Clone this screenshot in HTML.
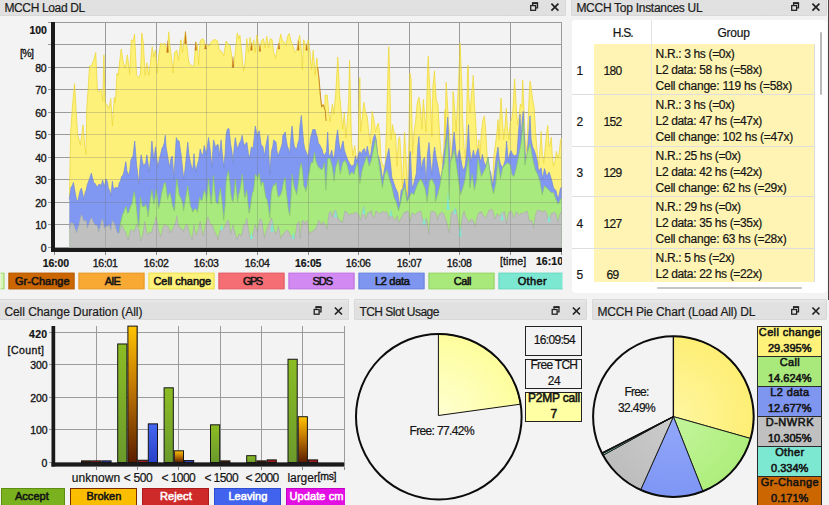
<!DOCTYPE html>
<html lang="en"><head><meta charset="utf-8"><title>MCCH Load</title>
<style>
html,body{margin:0;padding:0;background:#f3f3f3}
body{width:829px;height:505px;overflow:hidden;background:#f3f3f3;position:relative;
 font-family:"Liberation Sans",sans-serif;font-size:12px;color:#141414}
.t{position:absolute;white-space:nowrap;line-height:1;-webkit-text-stroke:.2px currentColor}
.tb{position:absolute;background:linear-gradient(#e9e9e9,#e1e1e1 3px,#e0e0e0);border:1px solid #d8d8d8;box-sizing:border-box;border-radius:1px}
.lg{position:absolute;box-sizing:border-box;border:1px solid #000;height:17px;top:0}
.bx{position:absolute;box-sizing:border-box;border:1px solid #222}
.ab{position:absolute}
svg{position:absolute;left:0;top:0}
</style></head><body>

<div class="tb" style="left:-1px;top:-6px;width:567px;height:22px"></div>
<div class="t" style="left:4.40px;top:2px;letter-spacing:-0.350px;color:#1c1c1c;">MCCH Load DL</div>
<div class="tb" style="left:571px;top:-6px;width:256px;height:22px"></div>
<div class="t" style="left:576.40px;top:2px;letter-spacing:-0.278px;color:#1c1c1c;">MCCH Top Instances UL</div>
<div class="tb" style="left:-1px;top:299px;width:350px;height:21px"></div>
<div class="t" style="left:4.40px;top:306px;letter-spacing:-0.054px;color:#1c1c1c;">Cell Change Duration (All)</div>
<div class="tb" style="left:354px;top:299px;width:233px;height:21px"></div>
<div class="t" style="left:359.40px;top:306px;letter-spacing:-0.514px;color:#1c1c1c;">TCH Slot Usage</div>
<div class="tb" style="left:592px;top:299px;width:235px;height:21px"></div>
<div class="t" style="left:597.40px;top:306px;letter-spacing:-0.145px;color:#1c1c1c;">MCCH Pie Chart (Load All) DL</div>
<div class="ab" style="left:828px;top:0;width:1px;height:300px;background:#4a4744"></div>
<div class="ab" style="left:572px;top:20px;width:254.5px;height:273px;background:#fff;border-radius:4px"></div>
<div class="ab" style="left:594px;top:44px;width:220.5px;height:237.5px;background:#fff4b3"></div>
<div class="ab" style="left:651px;top:20px;width:1px;height:261.5px;background:#e4e4e4"></div>
<div class="ab" style="left:814px;top:44px;width:1px;height:237.5px;background:#dcdcdc"></div>
<div class="ab" style="left:572px;top:94px;width:243px;height:1px;background:#dedede"></div>
<div class="ab" style="left:572px;top:146px;width:243px;height:1px;background:#dedede"></div>
<div class="ab" style="left:572px;top:196px;width:243px;height:1px;background:#dedede"></div>
<div class="ab" style="left:572px;top:248px;width:243px;height:1px;background:#dedede"></div>
<div class="ab" style="left:820px;top:32px;width:2px;height:63px;background:#b9b9b9;border-radius:1px"></div>
<div class="ab" style="left:657px;top:287px;width:145px;height:2px;background:#c4c4c4;border-radius:1px"></div>
<div class="t" style="left:612.80px;top:27px;letter-spacing:-0.835px;">H.S.</div>
<div class="t" style="left:717.40px;top:27px;letter-spacing:-0.191px;">Group</div>
<div class="ab" style="left:572px;top:20px;width:254px;height:261.5px;overflow:hidden">
<div class="t" style="left:4.40px;top:45px;">1</div>
<div class="t" style="left:31.39px;top:45px;letter-spacing:-0.667px;">180</div>
<div class="t" style="left:83.60px;top:28px;letter-spacing:-0.343px;">N.R.: 3 hs (=0x)</div>
<div class="t" style="left:83.60px;top:44px;letter-spacing:-0.352px;">L2 data: 58 hs (=58x)</div>
<div class="t" style="left:83.60px;top:60px;letter-spacing:-0.247px;">Cell change: 119 hs (=58x)</div>
<div class="t" style="left:4.40px;top:96px;">2</div>
<div class="t" style="left:31.39px;top:96px;letter-spacing:-0.667px;">152</div>
<div class="t" style="left:83.60px;top:79px;letter-spacing:-0.343px;">N.R.: 3 hs (=0x)</div>
<div class="t" style="left:83.60px;top:95px;letter-spacing:-0.352px;">L2 data: 47 hs (=47x)</div>
<div class="t" style="left:83.60px;top:111px;letter-spacing:-0.249px;">Cell change: 102 hs (=47x)</div>
<div class="t" style="left:4.40px;top:147px;">3</div>
<div class="t" style="left:31.39px;top:147px;letter-spacing:-0.667px;">129</div>
<div class="t" style="left:83.60px;top:130px;letter-spacing:-0.348px;">N.R.: 25 hs (=0x)</div>
<div class="t" style="left:83.60px;top:146px;letter-spacing:-0.352px;">L2 data: 42 hs (=42x)</div>
<div class="t" style="left:83.60px;top:162px;letter-spacing:-0.247px;">Cell change: 62 hs (=29x)</div>
<div class="t" style="left:4.40px;top:198px;">4</div>
<div class="t" style="left:31.39px;top:198px;letter-spacing:-0.667px;">127</div>
<div class="t" style="left:83.60px;top:181px;letter-spacing:-0.348px;">N.R.: 29 hs (=0x)</div>
<div class="t" style="left:83.60px;top:197px;letter-spacing:-0.352px;">L2 data: 35 hs (=35x)</div>
<div class="t" style="left:83.60px;top:213px;letter-spacing:-0.247px;">Cell change: 63 hs (=28x)</div>
<div class="t" style="left:4.40px;top:249px;">5</div>
<div class="t" style="left:34.39px;top:249px;letter-spacing:-0.667px;">69</div>
<div class="t" style="left:83.60px;top:232px;letter-spacing:-0.343px;">N.R.: 5 hs (=2x)</div>
<div class="t" style="left:83.60px;top:248px;letter-spacing:-0.352px;">L2 data: 22 hs (=22x)</div>
<div class="t" style="left:83.60px;top:264px;letter-spacing:-0.245px;">Cell change: 33 hs (=11x)</div>
</div>
<svg width="829" height="505" viewBox="0 0 829 505">
<path d="M48,247.5H561.5M48,224.5H561.5M48,202.5H561.5M48,179.5H561.5M48,157.5H561.5M48,134.5H561.5M48,112.5H561.5M48,89.5H561.5M48,67.5H561.5M48,44.5H561.5M48,22.5H561.5M105.5,22V247.5M156.5,22V247.5M206.5,22V247.5M257.5,22V247.5M308.5,22V247.5M358.5,22V247.5M409.5,22V247.5M459.5,22V247.5M510.5,22V247.5M561.5,22V247.5" stroke="#9b9b9b" fill="none"/>
<defs><clipPath id="cpA"><path d="M69.3,249L69.3,199.6L69.4,199.6L70.6,134.0L72.2,109.9L74.5,83.5L76.1,109.9L77.5,132.9L79.1,140.0L80.3,145.0L81.4,137.5L83.0,124.8L84.9,146.6L86.0,154.5L86.7,109.9L88.3,86.9L89.5,66.2L91.8,65.1L93.6,60.5L95.7,52.5L97.5,91.5L99.8,91.5L100.9,89.2L102.8,100.7L103.9,54.8L105.1,103.0L106.7,104.1L109.0,108.7L110.8,98.4L112.4,126.0L114.3,97.3L115.4,103.0L117.0,73.1L118.2,75.4L119.3,65.1L121.2,49.0L123.5,63.9L125.1,68.5L127.4,54.8L129.7,74.3L131.3,39.8L133.1,41.0L134.5,34.1L136.6,75.4L138.9,77.7L140.5,73.1L141.8,32.9L143.4,43.3L145.1,75.4L146.9,62.8L148.7,75.4L150.3,63.9L152.2,46.7L153.8,57.1L155.4,50.2L157.2,73.1L158.8,54.8L160.7,43.3L163.0,44.4L164.8,43.3L166.4,47.9L167.6,52.5L168.7,31.8L169.9,45.6L171.7,59.4L173.1,73.1L174.5,52.5L176.8,50.2L178.6,60.5L180.9,39.8L182.5,52.5L183.6,43.3L185.5,31.8L187.1,47.9L188.7,61.6L190.5,65.1L192.8,66.2L194.0,65.1L195.8,42.1L197.4,44.4L198.6,65.1L200.2,41.0L202.0,38.7L203.9,39.8L205.5,47.9L207.1,44.4L208.9,46.7L211.2,42.1L213.5,39.8L215.8,39.8L217.6,41.0L219.3,50.2L221.6,51.3L223.8,55.9L226.1,41.0L228.4,44.4L230.1,45.6L231.9,57.1L233.5,67.4L235.3,52.5L237.2,32.9L238.8,38.7L239.9,35.2L241.5,50.2L243.4,70.8L245.0,63.9L245.0,63.9L246.8,38.7L248.4,52.5L250.1,37.5L251.9,50.2L253.7,39.8L255.3,52.5L256.9,35.2L258.3,43.3L259.9,50.2L261.5,41.0L263.4,38.7L265.2,47.9L266.8,36.4L268.7,47.9L270.3,38.7L272.1,39.8L273.7,52.5L275.6,58.2L277.2,47.9L279.0,43.3L280.8,34.1L282.4,41.0L284.1,42.1L285.9,45.6L287.5,36.4L289.1,33.6L290.9,41.0L293.2,46.7L295.1,52.5L296.7,50.2L298.3,41.0L299.7,35.2L301.3,50.2L302.4,69.7L303.6,39.8L305.2,44.4L306.6,47.9L308.2,39.8L309.8,50.2L311.6,69.7L313.2,50.2L315.1,75.4L316.9,58.2L318.5,75.4L319.9,93.8L321.5,106.4L323.1,104.1L324.9,109.9L325.0,95.0L327.2,95.0L328.7,111.3L330.2,121.7L331.7,108.4L332.4,103.9L333.9,114.3L335.7,93.8L336.1,86.7L337.8,57.1L339.1,83.1L339.6,93.8L341.0,109.9L342.8,129.2L344.3,112.8L345.8,138.1L347.3,121.7L348.8,98.0L349.5,60.5L350.2,84.8L351.4,139.6L352.9,155.9L354.7,145.5L356.2,157.4L358.0,156.4L359.5,79.4L359.9,77.7L360.6,132.1L362.1,118.8L363.9,102.4L365.4,111.3L367.3,117.3L368.8,133.6L370.3,144.0L372.2,111.3L374.0,120.2L375.5,132.1L377.0,126.2L378.2,123.2L379.7,133.6L381.1,160.3L382.9,166.3L385.2,164.8L386.6,124.7L388.1,66.0L388.8,46.7L389.6,72.4L391.1,139.6L392.6,124.7L394.1,133.6L395.5,133.6L397.0,166.3L398.5,139.6L399.7,136.6L401.0,157.4L402.5,188.6L404.5,132.1L405.9,154.4L407.4,198.3L408.9,139.6L409.9,73.1L410.1,74.0L411.1,79.5L412.6,154.4L414.1,132.1L415.6,121.7L417.1,103.9L418.9,97.2L420.4,106.9L421.8,129.2L423.3,99.5L424.8,117.3L426.0,132.1L427.5,72.4L428.3,55.9L429.0,72.9L430.5,100.9L431.9,136.6L432.9,86.9L433.4,81.9L434.5,70.8L434.9,80.8L436.4,100.9L437.9,103.9L439.4,132.1L440.8,151.4L442.3,163.3L443.8,147.0L445.0,109.9L445.0,144.0L446.1,82.3L446.2,83.4L447.2,99.5L448.7,124.7L450.2,139.6L451.7,157.8L452.7,124.7L453.0,91.5L453.6,95.0L454.7,109.9L456.1,132.1L457.2,109.9L458.4,86.0L459.9,50.4L460.1,43.3L461.3,72.3L462.2,93.8L462.5,117.3L464.0,147.0L465.5,158.9L466.5,124.7L467.6,68.0L468.2,65.1L468.8,98.0L470.2,112.8L471.4,95.0L472.9,81.4L473.2,75.4L474.4,103.9L475.9,124.7L476.9,147.0L478.0,148.3L478.9,139.6L479.9,158.5L481.4,132.1L482.9,120.2L484.4,115.8L485.8,132.1L487.3,158.9L489.6,169.8L492.5,184.2L494.0,154.4L495.5,144.0L497.0,132.1L498.0,119.5L499.2,139.6L500.3,109.9L501.1,98.0L502.2,117.3L503.7,139.6L505.2,124.7L506.3,108.4L507.4,127.7L508.9,139.6L510.3,121.7L511.5,120.2L513.0,109.9L514.5,80.3L514.6,78.9L516.0,102.4L517.5,124.7L519.0,117.3L520.4,103.9L521.9,106.9L522.6,80.0L523.0,86.8L524.0,109.9L525.2,139.6L526.7,151.4L528.2,117.3L529.7,85.4L530.2,81.2L531.1,87.2L532.6,99.5L534.1,106.9L535.6,132.1L537.1,151.4L538.6,166.3L540.1,147.0L541.2,131.4L542.3,154.4L543.8,163.3L545.3,147.0L546.7,132.1L547.8,125.4L549.0,147.0L550.2,144.0L551.2,137.3L552.2,154.4L553.4,166.3L554.9,161.8L556.4,151.4L557.6,157.4L559.1,154.4L560.1,144.0L561.3,138.1L561.6,138.1L561.6,249Z"/></clipPath></defs>
<path d="M69.3,249L69.3,199.6L69.4,199.6L70.6,134.0L72.2,109.9L74.5,83.5L76.1,109.9L77.5,132.9L79.1,140.0L80.3,145.0L81.4,137.5L83.0,124.8L84.9,146.6L86.0,154.5L86.7,109.9L88.3,86.9L89.5,66.2L91.8,65.1L93.6,60.5L95.7,52.5L97.5,91.5L99.8,91.5L100.9,89.2L102.8,100.7L103.9,54.8L105.1,103.0L106.7,104.1L109.0,108.7L110.8,98.4L112.4,126.0L114.3,97.3L115.4,103.0L117.0,73.1L118.2,75.4L119.3,65.1L121.2,49.0L123.5,63.9L125.1,68.5L127.4,54.8L129.7,74.3L131.3,39.8L133.1,41.0L134.5,34.1L136.6,75.4L138.9,77.7L140.5,73.1L141.8,32.9L143.4,43.3L145.1,75.4L146.9,62.8L148.7,75.4L150.3,63.9L152.2,46.7L153.8,57.1L155.4,50.2L157.2,73.1L158.8,54.8L160.7,43.3L163.0,44.4L164.8,43.3L166.4,47.9L167.6,52.5L168.7,31.8L169.9,45.6L171.7,59.4L173.1,73.1L174.5,52.5L176.8,50.2L178.6,60.5L180.9,39.8L182.5,52.5L183.6,43.3L185.5,31.8L187.1,47.9L188.7,61.6L190.5,65.1L192.8,66.2L194.0,65.1L195.8,42.1L197.4,44.4L198.6,65.1L200.2,41.0L202.0,38.7L203.9,39.8L205.5,47.9L207.1,44.4L208.9,46.7L211.2,42.1L213.5,39.8L215.8,39.8L217.6,41.0L219.3,50.2L221.6,51.3L223.8,55.9L226.1,41.0L228.4,44.4L230.1,45.6L231.9,57.1L233.5,67.4L235.3,52.5L237.2,32.9L238.8,38.7L239.9,35.2L241.5,50.2L243.4,70.8L245.0,63.9L245.0,63.9L246.8,38.7L248.4,52.5L250.1,37.5L251.9,50.2L253.7,39.8L255.3,52.5L256.9,35.2L258.3,43.3L259.9,50.2L261.5,41.0L263.4,38.7L265.2,47.9L266.8,36.4L268.7,47.9L270.3,38.7L272.1,39.8L273.7,52.5L275.6,58.2L277.2,47.9L279.0,43.3L280.8,34.1L282.4,41.0L284.1,42.1L285.9,45.6L287.5,36.4L289.1,33.6L290.9,41.0L293.2,46.7L295.1,52.5L296.7,50.2L298.3,41.0L299.7,35.2L301.3,50.2L302.4,69.7L303.6,39.8L305.2,44.4L306.6,47.9L308.2,39.8L309.8,50.2L311.6,69.7L313.2,50.2L315.1,75.4L316.9,58.2L318.5,75.4L319.9,93.8L321.5,106.4L323.1,104.1L324.9,109.9L325.0,95.0L327.2,95.0L328.7,111.3L330.2,121.7L331.7,108.4L332.4,103.9L333.9,114.3L335.7,93.8L336.1,86.7L337.8,57.1L339.1,83.1L339.6,93.8L341.0,109.9L342.8,129.2L344.3,112.8L345.8,138.1L347.3,121.7L348.8,98.0L349.5,60.5L350.2,84.8L351.4,139.6L352.9,155.9L354.7,145.5L356.2,157.4L358.0,156.4L359.5,79.4L359.9,77.7L360.6,132.1L362.1,118.8L363.9,102.4L365.4,111.3L367.3,117.3L368.8,133.6L370.3,144.0L372.2,111.3L374.0,120.2L375.5,132.1L377.0,126.2L378.2,123.2L379.7,133.6L381.1,160.3L382.9,166.3L385.2,164.8L386.6,124.7L388.1,66.0L388.8,46.7L389.6,72.4L391.1,139.6L392.6,124.7L394.1,133.6L395.5,133.6L397.0,166.3L398.5,139.6L399.7,136.6L401.0,157.4L402.5,188.6L404.5,132.1L405.9,154.4L407.4,198.3L408.9,139.6L409.9,73.1L410.1,74.0L411.1,79.5L412.6,154.4L414.1,132.1L415.6,121.7L417.1,103.9L418.9,97.2L420.4,106.9L421.8,129.2L423.3,99.5L424.8,117.3L426.0,132.1L427.5,72.4L428.3,55.9L429.0,72.9L430.5,100.9L431.9,136.6L432.9,86.9L433.4,81.9L434.5,70.8L434.9,80.8L436.4,100.9L437.9,103.9L439.4,132.1L440.8,151.4L442.3,163.3L443.8,147.0L445.0,109.9L445.0,144.0L446.1,82.3L446.2,83.4L447.2,99.5L448.7,124.7L450.2,139.6L451.7,157.8L452.7,124.7L453.0,91.5L453.6,95.0L454.7,109.9L456.1,132.1L457.2,109.9L458.4,86.0L459.9,50.4L460.1,43.3L461.3,72.3L462.2,93.8L462.5,117.3L464.0,147.0L465.5,158.9L466.5,124.7L467.6,68.0L468.2,65.1L468.8,98.0L470.2,112.8L471.4,95.0L472.9,81.4L473.2,75.4L474.4,103.9L475.9,124.7L476.9,147.0L478.0,148.3L478.9,139.6L479.9,158.5L481.4,132.1L482.9,120.2L484.4,115.8L485.8,132.1L487.3,158.9L489.6,169.8L492.5,184.2L494.0,154.4L495.5,144.0L497.0,132.1L498.0,119.5L499.2,139.6L500.3,109.9L501.1,98.0L502.2,117.3L503.7,139.6L505.2,124.7L506.3,108.4L507.4,127.7L508.9,139.6L510.3,121.7L511.5,120.2L513.0,109.9L514.5,80.3L514.6,78.9L516.0,102.4L517.5,124.7L519.0,117.3L520.4,103.9L521.9,106.9L522.6,80.0L523.0,86.8L524.0,109.9L525.2,139.6L526.7,151.4L528.2,117.3L529.7,85.4L530.2,81.2L531.1,87.2L532.6,99.5L534.1,106.9L535.6,132.1L537.1,151.4L538.6,166.3L540.1,147.0L541.2,131.4L542.3,154.4L543.8,163.3L545.3,147.0L546.7,132.1L547.8,125.4L549.0,147.0L550.2,144.0L551.2,137.3L552.2,154.4L553.4,166.3L554.9,161.8L556.4,151.4L557.6,157.4L559.1,154.4L560.1,144.0L561.3,138.1L561.6,138.1L561.6,249Z" fill="#fdf17a"/><path d="M69.3,199.6L69.4,199.6L70.6,134.0L72.2,109.9L74.5,83.5L76.1,109.9L77.5,132.9L79.1,140.0L80.3,145.0L81.4,137.5L83.0,124.8L84.9,146.6L86.0,154.5L86.7,109.9L88.3,86.9L89.5,66.2L91.8,65.1L93.6,60.5L95.7,52.5L97.5,91.5L99.8,91.5L100.9,89.2L102.8,100.7L103.9,54.8L105.1,103.0L106.7,104.1L109.0,108.7L110.8,98.4L112.4,126.0L114.3,97.3L115.4,103.0L117.0,73.1L118.2,75.4L119.3,65.1L121.2,49.0L123.5,63.9L125.1,68.5L127.4,54.8L129.7,74.3L131.3,39.8L133.1,41.0L134.5,34.1L136.6,75.4L138.9,77.7L140.5,73.1L141.8,32.9L143.4,43.3L145.1,75.4L146.9,62.8L148.7,75.4L150.3,63.9L152.2,46.7L153.8,57.1L155.4,50.2L157.2,73.1L158.8,54.8L160.7,43.3L163.0,44.4L164.8,43.3L166.4,47.9L167.6,52.5L168.7,31.8L169.9,45.6L171.7,59.4L173.1,73.1L174.5,52.5L176.8,50.2L178.6,60.5L180.9,39.8L182.5,52.5L183.6,43.3L185.5,31.8L187.1,47.9L188.7,61.6L190.5,65.1L192.8,66.2L194.0,65.1L195.8,42.1L197.4,44.4L198.6,65.1L200.2,41.0L202.0,38.7L203.9,39.8L205.5,47.9L207.1,44.4L208.9,46.7L211.2,42.1L213.5,39.8L215.8,39.8L217.6,41.0L219.3,50.2L221.6,51.3L223.8,55.9L226.1,41.0L228.4,44.4L230.1,45.6L231.9,57.1L233.5,67.4L235.3,52.5L237.2,32.9L238.8,38.7L239.9,35.2L241.5,50.2L243.4,70.8L245.0,63.9L245.0,63.9L246.8,38.7L248.4,52.5L250.1,37.5L251.9,50.2L253.7,39.8L255.3,52.5L256.9,35.2L258.3,43.3L259.9,50.2L261.5,41.0L263.4,38.7L265.2,47.9L266.8,36.4L268.7,47.9L270.3,38.7L272.1,39.8L273.7,52.5L275.6,58.2L277.2,47.9L279.0,43.3L280.8,34.1L282.4,41.0L284.1,42.1L285.9,45.6L287.5,36.4L289.1,33.6L290.9,41.0L293.2,46.7L295.1,52.5L296.7,50.2L298.3,41.0L299.7,35.2L301.3,50.2L302.4,69.7L303.6,39.8L305.2,44.4L306.6,47.9L308.2,39.8L309.8,50.2L311.6,69.7L313.2,50.2L315.1,75.4L316.9,58.2L318.5,75.4L319.9,93.8L321.5,106.4L323.1,104.1L324.9,109.9L325.0,95.0L327.2,95.0L328.7,111.3L330.2,121.7L331.7,108.4L332.4,103.9L333.9,114.3L335.7,93.8L336.1,86.7L337.8,57.1L339.1,83.1L339.6,93.8L341.0,109.9L342.8,129.2L344.3,112.8L345.8,138.1L347.3,121.7L348.8,98.0L349.5,60.5L350.2,84.8L351.4,139.6L352.9,155.9L354.7,145.5L356.2,157.4L358.0,156.4L359.5,79.4L359.9,77.7L360.6,132.1L362.1,118.8L363.9,102.4L365.4,111.3L367.3,117.3L368.8,133.6L370.3,144.0L372.2,111.3L374.0,120.2L375.5,132.1L377.0,126.2L378.2,123.2L379.7,133.6L381.1,160.3L382.9,166.3L385.2,164.8L386.6,124.7L388.1,66.0L388.8,46.7L389.6,72.4L391.1,139.6L392.6,124.7L394.1,133.6L395.5,133.6L397.0,166.3L398.5,139.6L399.7,136.6L401.0,157.4L402.5,188.6L404.5,132.1L405.9,154.4L407.4,198.3L408.9,139.6L409.9,73.1L410.1,74.0L411.1,79.5L412.6,154.4L414.1,132.1L415.6,121.7L417.1,103.9L418.9,97.2L420.4,106.9L421.8,129.2L423.3,99.5L424.8,117.3L426.0,132.1L427.5,72.4L428.3,55.9L429.0,72.9L430.5,100.9L431.9,136.6L432.9,86.9L433.4,81.9L434.5,70.8L434.9,80.8L436.4,100.9L437.9,103.9L439.4,132.1L440.8,151.4L442.3,163.3L443.8,147.0L445.0,109.9L445.0,144.0L446.1,82.3L446.2,83.4L447.2,99.5L448.7,124.7L450.2,139.6L451.7,157.8L452.7,124.7L453.0,91.5L453.6,95.0L454.7,109.9L456.1,132.1L457.2,109.9L458.4,86.0L459.9,50.4L460.1,43.3L461.3,72.3L462.2,93.8L462.5,117.3L464.0,147.0L465.5,158.9L466.5,124.7L467.6,68.0L468.2,65.1L468.8,98.0L470.2,112.8L471.4,95.0L472.9,81.4L473.2,75.4L474.4,103.9L475.9,124.7L476.9,147.0L478.0,148.3L478.9,139.6L479.9,158.5L481.4,132.1L482.9,120.2L484.4,115.8L485.8,132.1L487.3,158.9L489.6,169.8L492.5,184.2L494.0,154.4L495.5,144.0L497.0,132.1L498.0,119.5L499.2,139.6L500.3,109.9L501.1,98.0L502.2,117.3L503.7,139.6L505.2,124.7L506.3,108.4L507.4,127.7L508.9,139.6L510.3,121.7L511.5,120.2L513.0,109.9L514.5,80.3L514.6,78.9L516.0,102.4L517.5,124.7L519.0,117.3L520.4,103.9L521.9,106.9L522.6,80.0L523.0,86.8L524.0,109.9L525.2,139.6L526.7,151.4L528.2,117.3L529.7,85.4L530.2,81.2L531.1,87.2L532.6,99.5L534.1,106.9L535.6,132.1L537.1,151.4L538.6,166.3L540.1,147.0L541.2,131.4L542.3,154.4L543.8,163.3L545.3,147.0L546.7,132.1L547.8,125.4L549.0,147.0L550.2,144.0L551.2,137.3L552.2,154.4L553.4,166.3L554.9,161.8L556.4,151.4L557.6,157.4L559.1,154.4L560.1,144.0L561.3,138.1L561.6,138.1" fill="none" stroke="#efd93a" stroke-width=".8" stroke-linejoin="round"/>
<path d="M166.7,52.5L167.6,40.5L168.5,52.5Z" fill="#c8741a" stroke="#c07020" stroke-width=".3"/>
<path d="M184.6,43.7L185.5,31.3L186.4,43.7Z" fill="#c8741a" stroke="#c07020" stroke-width=".3"/>
<path d="M194.9,50.2L195.8,41.6L196.7,50.2Z" fill="#c8741a" stroke="#c07020" stroke-width=".3"/>
<path d="M204.6,49.0L205.5,43.9L206.4,49.0Z" fill="#c8741a" stroke="#c07020" stroke-width=".3"/>
<path d="M232.1,67.4L233.0,56.6L233.9,67.4Z" fill="#c8741a" stroke="#c07020" stroke-width=".3"/>
<path d="M250.5,50.2L251.4,42.8L252.3,50.2Z" fill="#c8741a" stroke="#c07020" stroke-width=".3"/>
<path d="M259.0,51.3L259.9,45.1L260.8,51.3Z" fill="#c8741a" stroke="#c07020" stroke-width=".3"/>
<path d="M278.1,49.0L279.0,42.8L279.9,49.0Z" fill="#c8741a" stroke="#c07020" stroke-width=".3"/>
<path d="M297.4,50.2L298.3,40.5L299.2,50.2Z" fill="#c8741a" stroke="#c07020" stroke-width=".3"/>
<path d="M305.7,50.2L306.6,43.9L307.5,50.2Z" fill="#c8741a" stroke="#c07020" stroke-width=".3"/>
<path d="M317.6,67.4L319.0,78.2L320.4,95.0L321.7,107.1L323.3,104.8L325.2,110.4L326.1,120.9" fill="none" stroke="#c98a2a"/>
<path d="M69.3,249L69.3,199.2L71.1,187.0L72.3,185.9L73.4,182.4L75.4,193.9L76.8,200.8L78.1,200.1L79.1,195.0L79.9,191.4L81.4,188.1L82.9,194.7L83.7,199.6L85.1,193.0L86.0,190.4L87.7,183.4L89.5,178.9L91.3,173.2L92.7,178.8L94.1,183.5L94.9,183.2L96.4,185.8L97.3,187.4L98.6,184.7L100.0,184.1L100.9,187.0L102.6,180.1L104.4,187.0L106.0,178.9L107.4,181.7L108.3,188.1L109.6,190.2L110.8,196.2L112.4,181.2L113.2,187.2L114.7,189.3L115.7,187.2L117.0,188.1L118.5,187.2L119.3,182.4L120.3,181.9L121.6,176.6L122.8,175.3L123.9,172.1L125.8,161.7L126.9,170.9L128.5,175.5L129.8,170.5L130.8,160.6L132.2,157.2L133.1,156.0L134.7,141.0L136.6,165.2L137.6,173.2L138.9,184.7L139.8,167.5L141.1,154.8L142.2,160.5L143.4,165.2L144.3,164.9L145.7,162.9L146.9,154.8L147.9,162.5L149.2,172.1L150.8,156.4L151.9,141.0L153.8,160.6L155.6,146.8L156.6,157.0L157.9,167.5L159.5,158.3L160.7,153.7L162.2,147.7L163.0,146.8L164.3,142.8L165.3,135.3L166.1,147.1L167.6,156.0L168.6,162.1L169.9,167.5L170.7,159.4L172.2,156.0L174.0,178.9L174.9,160.6L176.3,137.6L177.4,140.6L179.1,141.0L180.5,150.8L181.3,156.0L182.4,166.7L183.6,178.9L184.8,171.2L185.9,160.6L187.8,142.2L188.8,153.8L190.5,162.9L191.9,168.2L192.8,169.8L194.0,153.7L194.8,165.2L196.3,172.1L197.1,165.5L198.6,160.6L200.2,149.1L202.0,156.0L203.3,153.0L204.3,145.6L206.2,154.8L207.2,148.4L208.5,137.6L210.1,149.1L211.9,167.5L213.5,139.9L214.7,143.5L215.8,149.1L216.8,145.1L218.1,144.5L219.3,156.0L221.1,139.9L222.1,151.8L223.8,167.5L225.1,154.0L226.1,135.3L227.2,129.5L228.9,128.4L230.7,144.5L232.2,153.8L233.0,162.9L234.1,148.9L235.3,137.6L236.5,145.0L237.6,149.1L238.8,145.2L239.9,142.2L240.8,140.9L242.2,135.3L243.1,141.0L244.5,146.8L245.0,144.5L246.8,142.2L248.4,153.7L249.6,158.3L251.4,146.8L253.0,149.1L254.4,135.7L255.3,126.1L256.6,133.0L257.6,135.3L259.2,130.7L261.1,144.5L262.9,146.8L264.5,156.0L266.1,144.5L268.0,135.3L269.8,174.4L271.4,151.4L272.7,147.1L273.7,139.9L274.6,140.7L276.0,142.2L276.9,150.9L278.3,156.0L279.3,152.3L280.6,149.1L282.1,144.0L282.9,135.3L284.4,133.3L285.2,131.9L286.3,140.5L287.5,146.8L288.6,149.1L289.8,153.7L290.9,138.1L292.1,126.1L293.2,139.0L294.4,146.8L295.9,148.6L296.7,149.1L297.8,143.6L299.0,139.9L299.9,126.5L301.3,115.5L302.6,130.8L303.6,142.2L304.6,148.3L305.9,151.4L307.2,154.7L308.2,156.0L309.4,148.1L310.5,137.6L311.5,134.6L312.8,129.6L313.8,129.5L315.1,129.6L316.4,134.6L317.4,137.6L318.4,143.4L319.7,144.5L320.9,147.2L322.0,149.1L322.8,152.8L324.3,156.0L325.0,154.4L326.5,151.4L327.7,132.1L328.7,154.4L330.2,155.9L331.7,150.0L333.2,158.9L334.7,154.4L336.1,139.6L337.6,129.9L339.1,144.0L340.6,151.4L342.1,144.0L343.1,141.0L344.3,150.0L345.8,154.4L347.3,158.9L349.5,163.3L351.7,166.3L354.0,164.8L355.4,155.9L356.9,161.8L358.4,154.4L359.9,151.4L361.4,154.4L362.9,150.0L364.4,148.5L365.8,154.4L367.3,146.2L368.8,154.4L370.3,157.4L371.8,147.0L373.3,138.1L374.8,134.4L376.2,139.6L377.7,154.4L379.2,158.9L380.7,166.3L382.2,177.0L382.8,178.9L384.4,170.0L385.9,161.8L387.4,154.4L388.9,148.5L390.3,161.8L391.8,177.2L393.2,181.2L395.5,188.1L397.8,192.7L399.4,206.5L401.2,190.4L403.1,188.1L404.7,178.9L405.8,190.4L407.6,199.6L408.2,195.9L409.7,154.4L410.4,151.4L411.9,185.1L412.7,188.1L414.1,182.5L415.0,178.9L416.3,173.6L417.8,147.0L418.9,136.6L420.1,154.4L421.5,170.0L423.0,160.3L424.5,157.4L426.0,184.1L427.5,154.4L429.0,142.5L430.5,161.8L431.9,175.2L433.4,154.4L434.6,147.0L436.1,157.4L437.9,166.3L439.4,174.2L440.6,178.9L442.3,170.0L443.8,154.4L445.0,147.0L445.0,145.5L446.2,136.6L447.7,117.3L449.2,147.0L450.6,166.3L452.1,154.4L453.2,139.6L454.2,132.1L455.4,147.0L456.9,161.8L458.1,154.4L459.4,150.0L460.6,157.4L462.1,166.3L463.6,170.4L465.1,166.3L466.5,154.4L467.6,139.6L468.5,124.7L469.5,147.0L471.0,161.8L472.5,154.4L473.5,150.0L474.7,157.4L476.2,154.4L478.0,148.5L479.5,157.4L480.9,161.8L482.4,154.4L483.9,161.8L485.8,166.3L488.1,157.4L489.6,170.0L490.5,172.1L492.8,185.8L494.0,177.1L496.2,157.4L498.0,147.0L499.2,158.9L500.7,164.8L502.9,167.8L505.2,160.3L506.6,141.0L508.1,160.3L509.6,154.4L511.1,150.7L512.6,154.4L514.8,155.9L517.0,154.4L518.5,132.1L520.0,114.3L521.0,139.6L522.2,120.2L523.3,111.3L524.5,139.6L525.9,164.1L527.4,151.4L528.9,132.1L530.0,115.8L531.1,139.6L532.6,147.0L534.1,150.0L535.6,154.4L537.1,160.3L538.6,171.2L541.0,167.8L542.6,178.9L544.5,168.6L546.8,176.6L549.1,172.1L551.3,178.9L553.6,188.1L555.9,190.4L558.2,199.6L560.5,188.1L561.3,187.5L561.6,187.5L561.6,249Z" fill="#8098f2"/><path d="M69.3,199.2L71.1,187.0L72.3,185.9L73.4,182.4L75.4,193.9L76.8,200.8L78.1,200.1L79.1,195.0L79.9,191.4L81.4,188.1L82.9,194.7L83.7,199.6L85.1,193.0L86.0,190.4L87.7,183.4L89.5,178.9L91.3,173.2L92.7,178.8L94.1,183.5L94.9,183.2L96.4,185.8L97.3,187.4L98.6,184.7L100.0,184.1L100.9,187.0L102.6,180.1L104.4,187.0L106.0,178.9L107.4,181.7L108.3,188.1L109.6,190.2L110.8,196.2L112.4,181.2L113.2,187.2L114.7,189.3L115.7,187.2L117.0,188.1L118.5,187.2L119.3,182.4L120.3,181.9L121.6,176.6L122.8,175.3L123.9,172.1L125.8,161.7L126.9,170.9L128.5,175.5L129.8,170.5L130.8,160.6L132.2,157.2L133.1,156.0L134.7,141.0L136.6,165.2L137.6,173.2L138.9,184.7L139.8,167.5L141.1,154.8L142.2,160.5L143.4,165.2L144.3,164.9L145.7,162.9L146.9,154.8L147.9,162.5L149.2,172.1L150.8,156.4L151.9,141.0L153.8,160.6L155.6,146.8L156.6,157.0L157.9,167.5L159.5,158.3L160.7,153.7L162.2,147.7L163.0,146.8L164.3,142.8L165.3,135.3L166.1,147.1L167.6,156.0L168.6,162.1L169.9,167.5L170.7,159.4L172.2,156.0L174.0,178.9L174.9,160.6L176.3,137.6L177.4,140.6L179.1,141.0L180.5,150.8L181.3,156.0L182.4,166.7L183.6,178.9L184.8,171.2L185.9,160.6L187.8,142.2L188.8,153.8L190.5,162.9L191.9,168.2L192.8,169.8L194.0,153.7L194.8,165.2L196.3,172.1L197.1,165.5L198.6,160.6L200.2,149.1L202.0,156.0L203.3,153.0L204.3,145.6L206.2,154.8L207.2,148.4L208.5,137.6L210.1,149.1L211.9,167.5L213.5,139.9L214.7,143.5L215.8,149.1L216.8,145.1L218.1,144.5L219.3,156.0L221.1,139.9L222.1,151.8L223.8,167.5L225.1,154.0L226.1,135.3L227.2,129.5L228.9,128.4L230.7,144.5L232.2,153.8L233.0,162.9L234.1,148.9L235.3,137.6L236.5,145.0L237.6,149.1L238.8,145.2L239.9,142.2L240.8,140.9L242.2,135.3L243.1,141.0L244.5,146.8L245.0,144.5L246.8,142.2L248.4,153.7L249.6,158.3L251.4,146.8L253.0,149.1L254.4,135.7L255.3,126.1L256.6,133.0L257.6,135.3L259.2,130.7L261.1,144.5L262.9,146.8L264.5,156.0L266.1,144.5L268.0,135.3L269.8,174.4L271.4,151.4L272.7,147.1L273.7,139.9L274.6,140.7L276.0,142.2L276.9,150.9L278.3,156.0L279.3,152.3L280.6,149.1L282.1,144.0L282.9,135.3L284.4,133.3L285.2,131.9L286.3,140.5L287.5,146.8L288.6,149.1L289.8,153.7L290.9,138.1L292.1,126.1L293.2,139.0L294.4,146.8L295.9,148.6L296.7,149.1L297.8,143.6L299.0,139.9L299.9,126.5L301.3,115.5L302.6,130.8L303.6,142.2L304.6,148.3L305.9,151.4L307.2,154.7L308.2,156.0L309.4,148.1L310.5,137.6L311.5,134.6L312.8,129.6L313.8,129.5L315.1,129.6L316.4,134.6L317.4,137.6L318.4,143.4L319.7,144.5L320.9,147.2L322.0,149.1L322.8,152.8L324.3,156.0L325.0,154.4L326.5,151.4L327.7,132.1L328.7,154.4L330.2,155.9L331.7,150.0L333.2,158.9L334.7,154.4L336.1,139.6L337.6,129.9L339.1,144.0L340.6,151.4L342.1,144.0L343.1,141.0L344.3,150.0L345.8,154.4L347.3,158.9L349.5,163.3L351.7,166.3L354.0,164.8L355.4,155.9L356.9,161.8L358.4,154.4L359.9,151.4L361.4,154.4L362.9,150.0L364.4,148.5L365.8,154.4L367.3,146.2L368.8,154.4L370.3,157.4L371.8,147.0L373.3,138.1L374.8,134.4L376.2,139.6L377.7,154.4L379.2,158.9L380.7,166.3L382.2,177.0L382.8,178.9L384.4,170.0L385.9,161.8L387.4,154.4L388.9,148.5L390.3,161.8L391.8,177.2L393.2,181.2L395.5,188.1L397.8,192.7L399.4,206.5L401.2,190.4L403.1,188.1L404.7,178.9L405.8,190.4L407.6,199.6L408.2,195.9L409.7,154.4L410.4,151.4L411.9,185.1L412.7,188.1L414.1,182.5L415.0,178.9L416.3,173.6L417.8,147.0L418.9,136.6L420.1,154.4L421.5,170.0L423.0,160.3L424.5,157.4L426.0,184.1L427.5,154.4L429.0,142.5L430.5,161.8L431.9,175.2L433.4,154.4L434.6,147.0L436.1,157.4L437.9,166.3L439.4,174.2L440.6,178.9L442.3,170.0L443.8,154.4L445.0,147.0L445.0,145.5L446.2,136.6L447.7,117.3L449.2,147.0L450.6,166.3L452.1,154.4L453.2,139.6L454.2,132.1L455.4,147.0L456.9,161.8L458.1,154.4L459.4,150.0L460.6,157.4L462.1,166.3L463.6,170.4L465.1,166.3L466.5,154.4L467.6,139.6L468.5,124.7L469.5,147.0L471.0,161.8L472.5,154.4L473.5,150.0L474.7,157.4L476.2,154.4L478.0,148.5L479.5,157.4L480.9,161.8L482.4,154.4L483.9,161.8L485.8,166.3L488.1,157.4L489.6,170.0L490.5,172.1L492.8,185.8L494.0,177.1L496.2,157.4L498.0,147.0L499.2,158.9L500.7,164.8L502.9,167.8L505.2,160.3L506.6,141.0L508.1,160.3L509.6,154.4L511.1,150.7L512.6,154.4L514.8,155.9L517.0,154.4L518.5,132.1L520.0,114.3L521.0,139.6L522.2,120.2L523.3,111.3L524.5,139.6L525.9,164.1L527.4,151.4L528.9,132.1L530.0,115.8L531.1,139.6L532.6,147.0L534.1,150.0L535.6,154.4L537.1,160.3L538.6,171.2L541.0,167.8L542.6,178.9L544.5,168.6L546.8,176.6L549.1,172.1L551.3,178.9L553.6,188.1L555.9,190.4L558.2,199.6L560.5,188.1L561.3,187.5L561.6,187.5" fill="none" stroke="#6f86dc" stroke-width=".7" stroke-linejoin="round"/>
<path d="M69.3,249L69.3,229.3L71.1,222.6L72.0,223.3L73.4,223.7L75.0,228.7L76.8,232.9L78.1,227.5L79.1,224.9L79.9,220.8L81.4,214.6L82.4,217.1L83.7,221.4L85.2,220.8L86.0,220.3L87.2,228.3L88.5,225.4L89.5,222.6L90.7,219.2L91.8,218.0L93.0,222.0L94.1,223.7L95.2,225.1L96.4,224.9L97.6,226.9L98.6,231.8L100.6,225.8L102.1,219.1L103.1,222.2L104.4,228.3L105.8,227.1L106.7,226.0L108.0,226.7L109.0,224.9L110.8,230.6L112.4,220.3L113.7,223.4L114.7,223.7L115.8,228.7L117.0,231.8L118.1,233.8L119.2,233.0L119.3,232.9L120.3,224.3L121.6,219.1L122.7,214.2L123.9,212.3L124.8,209.0L126.2,206.5L127.4,213.4L128.8,212.4L129.7,208.8L131.0,205.3L132.0,204.2L133.1,196.9L134.3,191.6L135.2,198.5L136.6,208.8L137.5,219.9L138.9,227.2L140.5,197.3L142.3,206.5L144.4,206.7L145.7,204.2L147.1,209.2L148.0,216.9L149.1,208.8L150.3,199.6L151.9,190.4L153.8,204.2L155.1,198.3L156.1,189.3L157.5,197.2L158.4,208.8L159.6,205.0L160.7,199.6L161.8,192.5L163.0,188.1L164.1,183.5L165.3,182.4L166.7,192.6L167.6,199.6L168.7,195.3L169.9,192.7L171.3,198.8L172.2,204.2L173.6,209.2L174.5,211.1L175.6,194.6L176.8,178.9L178.0,186.7L179.1,195.0L180.0,196.5L181.3,199.6L182.7,203.4L183.6,211.1L184.5,204.8L185.9,197.3L187.8,185.8L189.0,196.3L190.5,206.5L191.7,208.7L192.8,212.3L194.3,209.2L195.1,208.8L196.2,209.2L197.4,212.3L198.7,203.8L199.7,197.3L200.8,200.1L202.0,200.8L203.1,195.9L204.3,190.4L205.7,194.4L206.6,201.9L208.5,178.9L209.5,190.4L211.2,204.2L212.5,190.4L213.5,175.5L214.5,188.0L215.8,201.9L216.7,202.9L218.1,204.2L218.9,197.0L220.4,188.1L222.5,206.2L223.8,220.3L225.2,203.9L226.1,183.5L227.0,176.3L228.4,170.9L229.9,183.0L230.7,192.7L231.8,199.3L233.0,201.9L234.3,191.8L235.3,178.9L236.3,189.1L237.6,201.9L238.7,194.6L239.9,190.4L241.0,184.4L242.2,174.4L243.3,183.7L244.5,197.3L245.0,197.3L246.8,190.4L247.7,200.5L249.1,213.4L250.5,205.9L251.4,199.6L252.4,193.3L253.7,190.4L255.3,174.4L256.8,176.3L257.6,178.9L259.2,173.2L261.1,185.8L262.0,182.2L263.4,182.4L264.2,188.4L265.7,197.3L266.9,199.2L268.0,204.2L269.8,218.0L271.4,192.7L272.3,188.7L273.7,184.7L274.7,185.7L276.0,182.4L276.9,190.0L278.3,197.3L279.6,195.8L280.6,195.0L282.1,190.3L282.9,185.8L283.9,181.4L285.2,177.8L286.0,189.5L287.5,201.9L288.5,210.5L289.8,215.7L291.2,195.0L292.1,174.4L292.9,180.2L294.4,188.1L295.4,190.3L296.7,195.0L297.7,188.0L299.0,177.8L299.9,168.4L301.3,162.9L302.7,174.6L303.6,185.8L305.1,188.3L305.9,191.6L307.3,184.8L308.2,176.6L309.5,172.0L310.5,165.2L311.6,162.2L312.8,162.9L314.6,152.5L315.7,160.5L317.4,165.2L318.8,168.2L319.7,167.5L320.7,169.3L322.0,169.8L323.3,166.9L324.3,162.9L325.9,190.4L327.7,158.9L330.0,158.3L332.3,167.5L334.1,181.2L335.7,167.5L338.4,158.9L340.3,174.4L342.6,162.9L345.1,160.3L347.2,165.2L349.5,175.5L351.8,172.1L354.1,174.4L355.7,167.5L357.6,162.9L359.9,183.5L362.2,169.8L364.5,162.9L366.8,156.0L369.1,166.3L371.3,160.6L373.6,149.1L375.5,139.6L377.8,156.0L380.1,172.1L382.4,188.1L384.7,174.4L387.0,169.8L389.3,178.9L391.6,185.8L393.9,197.3L396.2,201.9L398.5,211.1L400.8,201.9L403.1,190.4L404.7,187.0L407.0,201.9L409.3,197.3L411.6,192.7L413.8,195.0L416.1,188.1L418.4,182.4L420.7,178.9L423.0,183.5L424.9,188.1L427.2,201.9L429.5,181.2L431.8,178.9L435.0,185.8L435.3,201.9L437.6,195.0L439.9,185.8L442.2,172.1L444.5,162.9L446.1,146.8L447.7,135.1L449.1,199.6L450.3,162.9L452.6,156.0L454.2,150.0L456.0,162.9L458.3,178.9L460.6,195.0L462.9,188.1L465.2,178.9L468.5,157.4L469.8,188.1L472.1,174.4L474.4,190.4L476.7,178.9L478.0,158.9L481.3,176.6L483.6,172.1L485.9,167.5L488.1,158.0L489.3,168.6L491.6,185.8L493.5,193.9L495.8,183.5L498.0,160.3L500.4,178.9L502.6,168.0L504.9,165.2L507.2,162.9L510.3,164.8L511.8,174.4L514.1,176.6L516.4,167.5L518.7,156.0L521.0,144.0L523.3,121.7L524.9,165.2L527.2,153.8L530.0,144.0L533.0,160.6L535.3,169.8L537.6,174.4L539.9,181.2L542.2,195.0L544.5,185.8L546.8,188.1L549.1,190.4L551.3,192.7L553.6,192.7L555.9,199.6L558.2,204.2L560.5,199.6L561.6,197.9L561.6,249Z" fill="#a9ea7e"/><path d="M119.2,233.0L119.3,232.9L120.3,224.3L121.6,219.1L122.7,214.2L123.9,212.3L124.8,209.0L126.2,206.5L127.4,213.4L128.8,212.4L129.7,208.8L131.0,205.3L132.0,204.2L133.1,196.9L134.3,191.6L135.2,198.5L136.6,208.8L137.5,219.9L138.9,227.2L140.5,197.3L142.3,206.5L144.4,206.7L145.7,204.2L147.1,209.2L148.0,216.9L149.1,208.8L150.3,199.6L151.9,190.4L153.8,204.2L155.1,198.3L156.1,189.3L157.5,197.2L158.4,208.8L159.6,205.0L160.7,199.6L161.8,192.5L163.0,188.1L164.1,183.5L165.3,182.4L166.7,192.6L167.6,199.6L168.7,195.3L169.9,192.7L171.3,198.8L172.2,204.2L173.6,209.2L174.5,211.1L175.6,194.6L176.8,178.9L178.0,186.7L179.1,195.0L180.0,196.5L181.3,199.6L182.7,203.4L183.6,211.1L184.5,204.8L185.9,197.3L187.8,185.8L189.0,196.3L190.5,206.5L191.7,208.7L192.8,212.3L194.3,209.2L195.1,208.8L196.2,209.2L197.4,212.3L198.7,203.8L199.7,197.3L200.8,200.1L202.0,200.8L203.1,195.9L204.3,190.4L205.7,194.4L206.6,201.9L208.5,178.9L209.5,190.4L211.2,204.2L212.5,190.4L213.5,175.5L214.5,188.0L215.8,201.9L216.7,202.9L218.1,204.2L218.9,197.0L220.4,188.1L222.5,206.2L223.8,220.3L225.2,203.9L226.1,183.5L227.0,176.3L228.4,170.9L229.9,183.0L230.7,192.7L231.8,199.3L233.0,201.9L234.3,191.8L235.3,178.9L236.3,189.1L237.6,201.9L238.7,194.6L239.9,190.4L241.0,184.4L242.2,174.4L243.3,183.7L244.5,197.3L245.0,197.3L246.8,190.4L247.7,200.5L249.1,213.4L250.5,205.9L251.4,199.6L252.4,193.3L253.7,190.4L255.3,174.4L256.8,176.3L257.6,178.9L259.2,173.2L261.1,185.8L262.0,182.2L263.4,182.4L264.2,188.4L265.7,197.3L266.9,199.2L268.0,204.2L269.8,218.0L271.4,192.7L272.3,188.7L273.7,184.7L274.7,185.7L276.0,182.4L276.9,190.0L278.3,197.3L279.6,195.8L280.6,195.0L282.1,190.3L282.9,185.8L283.9,181.4L285.2,177.8L286.0,189.5L287.5,201.9L288.5,210.5L289.8,215.7L291.2,195.0L292.1,174.4L292.9,180.2L294.4,188.1L295.4,190.3L296.7,195.0L297.7,188.0L299.0,177.8L299.9,168.4L301.3,162.9L302.7,174.6L303.6,185.8L305.1,188.3L305.9,191.6L307.3,184.8L308.2,176.6L309.5,172.0L310.5,165.2L311.6,162.2L312.8,162.9L314.6,152.5L315.7,160.5L317.4,165.2L318.8,168.2L319.7,167.5L320.7,169.3L322.0,169.8L323.3,166.9L324.3,162.9L325.9,190.4L327.7,158.9L330.0,158.3L332.3,167.5L334.1,181.2L335.7,167.5L338.4,158.9L340.3,174.4L342.6,162.9L345.1,160.3L347.2,165.2L349.5,175.5L351.8,172.1L354.1,174.4L355.7,167.5L357.6,162.9L359.9,183.5L362.2,169.8L364.5,162.9L366.8,156.0L369.1,166.3L371.3,160.6L373.6,149.1L375.5,139.6L377.8,156.0L380.1,172.1L382.4,188.1L384.7,174.4L387.0,169.8L389.3,178.9L391.6,185.8L393.9,197.3L396.2,201.9L398.5,211.1L400.8,201.9L403.1,190.4L404.7,187.0L407.0,201.9L409.3,197.3L411.6,192.7L413.8,195.0L416.1,188.1L418.4,182.4L420.7,178.9L423.0,183.5L424.9,188.1L427.2,201.9L429.5,181.2L431.8,178.9L435.0,185.8L435.3,201.9L437.6,195.0L439.9,185.8L442.2,172.1L444.5,162.9L446.1,146.8L447.7,135.1L449.1,199.6L450.3,162.9L452.6,156.0L454.2,150.0L456.0,162.9L458.3,178.9L460.6,195.0L462.9,188.1L465.2,178.9L468.5,157.4L469.8,188.1L472.1,174.4L474.4,190.4L476.7,178.9L478.0,158.9L481.3,176.6L483.6,172.1L485.9,167.5L488.1,158.0L489.3,168.6L491.6,185.8L493.5,193.9L495.8,183.5L498.0,160.3L500.4,178.9L502.6,168.0L504.9,165.2L507.2,162.9L510.3,164.8L511.8,174.4L514.1,176.6L516.4,167.5L518.7,156.0L521.0,144.0L523.3,121.7L524.9,165.2L527.2,153.8L530.0,144.0L533.0,160.6L535.3,169.8L537.6,174.4L539.9,181.2L542.2,195.0L544.5,185.8L546.8,188.1L549.1,190.4L551.3,192.7L553.6,192.7L555.9,199.6L558.2,204.2L560.5,199.6L561.6,197.9" fill="none" stroke="#8dc866" stroke-width=".7" stroke-linejoin="round"/>
<path d="M69.3,249L69.3,229.3L71.1,222.6L72.0,223.3L73.4,223.7L75.0,228.7L76.8,232.9L78.1,227.5L79.1,224.9L79.9,220.8L81.4,214.6L82.4,217.1L83.7,221.4L85.2,220.8L86.0,220.3L87.2,228.3L88.5,225.4L89.5,222.6L90.7,219.2L91.8,218.0L93.0,222.0L94.1,223.7L95.2,225.1L96.4,224.9L97.6,226.9L98.6,231.8L100.6,225.8L102.1,219.1L103.1,222.2L104.4,228.3L105.8,227.1L106.7,226.0L108.0,226.7L109.0,224.9L110.8,230.6L112.4,220.3L113.7,223.4L114.7,223.7L115.8,228.7L117.0,231.8L118.1,233.8L119.3,232.9L120.7,227.6L121.6,224.9L122.5,226.3L123.9,229.5L125.4,231.6L126.2,234.1L128.1,239.8L129.5,234.0L130.8,229.5L132.5,230.3L134.3,231.8L135.3,228.0L136.6,223.7L137.8,227.9L138.9,229.5L140.1,236.6L141.1,241.0L143.2,232.8L144.6,221.4L145.9,226.7L146.9,234.1L148.3,234.4L149.2,231.8L150.6,232.6L151.5,232.9L152.8,228.0L153.8,224.9L155.2,221.1L156.1,216.9L157.1,221.8L158.4,229.5L159.8,234.5L160.7,236.4L161.5,232.7L163.0,227.2L164.1,224.9L165.3,224.9L166.3,226.3L167.6,226.0L169.0,228.0L169.9,232.9L171.1,230.3L172.2,230.6L173.5,227.2L174.5,224.9L175.9,221.8L176.8,215.7L177.9,223.0L179.1,227.2L180.1,227.0L181.3,229.5L182.6,229.1L183.6,231.8L184.6,228.0L185.9,224.9L187.2,224.9L188.2,227.2L189.1,232.4L190.5,235.2L192.1,239.8L194.0,224.9L195.0,231.5L196.3,235.2L197.7,231.4L198.6,228.3L200.2,221.4L201.6,229.0L203.2,236.4L204.4,230.9L205.5,224.9L206.7,221.3L207.8,216.9L209.2,220.3L210.1,223.7L211.2,225.0L212.4,224.9L213.3,227.7L214.7,231.8L216.9,235.9L218.1,239.8L219.3,233.1L220.4,229.5L222.0,229.2L223.8,228.3L224.7,226.4L226.1,223.7L227.4,220.6L228.4,220.3L229.7,227.1L230.7,234.1L232.0,229.0L233.0,224.9L234.3,230.2L235.3,234.1L237.2,239.8L238.8,234.1L239.6,233.8L241.1,236.4L242.3,232.1L243.4,224.9L245.0,224.9L246.8,218.0L248.4,229.5L249.4,234.5L250.7,239.8L252.0,236.4L253.0,234.1L254.1,228.9L255.3,224.9L256.4,228.6L257.6,231.8L258.6,225.1L259.9,219.1L261.3,219.4L262.2,222.6L263.4,231.4L264.5,238.7L265.5,233.2L266.8,229.5L268.2,225.8L269.1,223.7L270.1,220.7L271.4,218.0L272.7,222.5L273.7,229.5L274.7,231.3L276.0,234.1L277.4,229.9L278.3,226.0L279.7,231.3L280.6,238.7L281.6,236.9L282.9,234.1L284.3,232.8L285.2,231.8L286.2,230.0L287.5,230.6L288.7,231.4L289.8,234.1L291.2,236.3L292.1,236.4L293.0,236.8L294.4,238.7L295.8,232.2L296.7,224.9L298.0,222.7L299.0,221.4L300.1,238.7L301.0,228.8L302.4,220.3L303.8,221.3L304.7,223.7L305.8,221.8L307.0,220.3L308.1,226.9L309.3,234.1L310.8,231.8L311.6,231.8L312.4,232.1L313.9,229.5L315.3,229.9L316.2,227.2L317.3,225.2L318.5,220.3L320.0,221.7L320.8,224.9L322.1,224.2L323.1,221.4L324.4,223.2L325.4,224.9L327.2,229.5L328.9,213.4L330.5,211.1L332.3,216.9L334.1,211.1L335.7,210.0L336.7,214.0L338.0,219.1L339.0,218.9L340.3,221.4L341.5,221.3L342.6,222.6L344.0,215.4L344.9,211.1L346.4,212.3L347.2,212.3L348.7,214.7L349.5,214.6L350.9,214.2L351.8,213.4L352.6,214.2L354.1,213.4L355.0,212.2L356.4,212.3L357.7,213.5L358.7,214.6L360.6,220.3L362.2,212.3L363.8,206.5L365.6,219.1L366.7,217.1L367.9,212.3L369.1,212.3L370.2,213.4L371.3,210.0L372.3,215.1L373.6,218.0L374.8,215.5L375.9,211.1L377.0,211.3L378.2,213.4L379.4,213.8L380.5,212.3L381.5,212.6L382.8,211.1L384.3,212.7L385.1,212.3L386.5,211.3L387.4,213.4L389.3,219.1L390.9,211.1L392.1,215.7L393.2,218.0L394.0,218.4L395.5,220.3L397.1,215.7L398.9,222.6L399.9,220.4L401.2,218.0L402.3,215.6L403.5,213.4L404.9,211.8L405.8,213.4L406.7,211.1L408.1,211.1L409.9,222.6L411.6,213.4L412.4,212.6L413.8,214.6L415.3,215.1L416.1,213.4L417.0,212.8L418.4,212.3L419.5,211.1L420.7,211.1L421.8,216.2L423.0,220.3L424.9,224.9L426.5,218.0L427.7,225.6L428.8,234.1L430.6,212.3L431.6,211.1L432.9,211.1L433.7,211.9L435.0,212.3L435.3,212.3L436.6,215.9L437.6,220.3L438.5,215.8L439.9,213.4L441.0,213.2L442.2,212.3L443.6,213.6L444.5,215.7L445.9,219.5L446.8,222.6L447.9,227.4L449.1,232.9L450.3,223.2L451.4,212.3L452.5,212.3L453.7,211.1L454.8,209.1L456.0,208.8L457.2,216.3L458.3,222.6L460.1,236.4L461.8,220.3L462.6,215.5L464.1,211.1L465.2,215.8L466.4,218.0L467.8,219.9L468.6,222.6L470.1,221.8L470.9,219.1L471.9,219.6L473.2,220.3L475.1,227.2L476.7,218.0L477.6,216.1L479.0,212.3L480.2,212.9L481.3,211.1L482.6,213.9L483.6,215.7L484.9,217.1L485.9,218.0L486.8,215.4L488.2,212.3L489.0,210.0L490.5,210.0L491.8,209.1L492.8,211.1L493.6,213.8L495.1,219.1L496.5,215.2L497.4,213.4L498.2,215.6L499.7,215.7L500.5,215.1L502.0,212.3L503.2,212.8L504.3,211.1L505.7,217.7L506.6,223.7L507.9,216.5L508.9,212.3L510.2,211.7L511.1,211.1L512.4,213.3L513.4,218.0L514.8,216.5L515.7,212.3L516.6,212.3L518.0,213.4L519.2,215.0L520.3,214.6L521.3,213.0L522.6,213.4L523.6,213.2L524.9,212.3L526.3,211.3L527.2,211.1L528.3,215.9L529.5,221.4L530.6,220.6L531.8,220.3L533.7,228.3L535.3,215.7L536.1,212.8L537.6,210.0L539.0,210.3L539.9,211.1L541.2,210.6L542.2,212.3L543.4,211.9L544.5,210.0L545.7,211.7L546.8,213.4L547.9,217.9L549.1,221.4L550.5,216.3L551.3,213.4L552.2,213.6L553.6,212.3L555.1,212.9L555.9,213.4L557.1,218.7L558.2,222.6L559.2,216.7L560.5,212.3L561.6,213.1L561.6,249Z" fill="#c0c0c0"/><path d="M69.3,229.3L71.1,222.6L72.0,223.3L73.4,223.7L75.0,228.7L76.8,232.9L78.1,227.5L79.1,224.9L79.9,220.8L81.4,214.6L82.4,217.1L83.7,221.4L85.2,220.8L86.0,220.3L87.2,228.3L88.5,225.4L89.5,222.6L90.7,219.2L91.8,218.0L93.0,222.0L94.1,223.7L95.2,225.1L96.4,224.9L97.6,226.9L98.6,231.8L100.6,225.8L102.1,219.1L103.1,222.2L104.4,228.3L105.8,227.1L106.7,226.0L108.0,226.7L109.0,224.9L110.8,230.6L112.4,220.3L113.7,223.4L114.7,223.7L115.8,228.7L117.0,231.8L118.1,233.8L119.3,232.9L120.7,227.6L121.6,224.9L122.5,226.3L123.9,229.5L125.4,231.6L126.2,234.1L128.1,239.8L129.5,234.0L130.8,229.5L132.5,230.3L134.3,231.8L135.3,228.0L136.6,223.7L137.8,227.9L138.9,229.5L140.1,236.6L141.1,241.0L143.2,232.8L144.6,221.4L145.9,226.7L146.9,234.1L148.3,234.4L149.2,231.8L150.6,232.6L151.5,232.9L152.8,228.0L153.8,224.9L155.2,221.1L156.1,216.9L157.1,221.8L158.4,229.5L159.8,234.5L160.7,236.4L161.5,232.7L163.0,227.2L164.1,224.9L165.3,224.9L166.3,226.3L167.6,226.0L169.0,228.0L169.9,232.9L171.1,230.3L172.2,230.6L173.5,227.2L174.5,224.9L175.9,221.8L176.8,215.7L177.9,223.0L179.1,227.2L180.1,227.0L181.3,229.5L182.6,229.1L183.6,231.8L184.6,228.0L185.9,224.9L187.2,224.9L188.2,227.2L189.1,232.4L190.5,235.2L192.1,239.8L194.0,224.9L195.0,231.5L196.3,235.2L197.7,231.4L198.6,228.3L200.2,221.4L201.6,229.0L203.2,236.4L204.4,230.9L205.5,224.9L206.7,221.3L207.8,216.9L209.2,220.3L210.1,223.7L211.2,225.0L212.4,224.9L213.3,227.7L214.7,231.8L216.9,235.9L218.1,239.8L219.3,233.1L220.4,229.5L222.0,229.2L223.8,228.3L224.7,226.4L226.1,223.7L227.4,220.6L228.4,220.3L229.7,227.1L230.7,234.1L232.0,229.0L233.0,224.9L234.3,230.2L235.3,234.1L237.2,239.8L238.8,234.1L239.6,233.8L241.1,236.4L242.3,232.1L243.4,224.9L245.0,224.9L246.8,218.0L248.4,229.5L249.4,234.5L250.7,239.8L252.0,236.4L253.0,234.1L254.1,228.9L255.3,224.9L256.4,228.6L257.6,231.8L258.6,225.1L259.9,219.1L261.3,219.4L262.2,222.6L263.4,231.4L264.5,238.7L265.5,233.2L266.8,229.5L268.2,225.8L269.1,223.7L270.1,220.7L271.4,218.0L272.7,222.5L273.7,229.5L274.7,231.3L276.0,234.1L277.4,229.9L278.3,226.0L279.7,231.3L280.6,238.7L281.6,236.9L282.9,234.1L284.3,232.8L285.2,231.8L286.2,230.0L287.5,230.6L288.7,231.4L289.8,234.1L291.2,236.3L292.1,236.4L293.0,236.8L294.4,238.7L295.8,232.2L296.7,224.9L298.0,222.7L299.0,221.4L300.1,238.7L301.0,228.8L302.4,220.3L303.8,221.3L304.7,223.7L305.8,221.8L307.0,220.3L308.1,226.9L309.3,234.1L310.8,231.8L311.6,231.8L312.4,232.1L313.9,229.5L315.3,229.9L316.2,227.2L317.3,225.2L318.5,220.3L320.0,221.7L320.8,224.9L322.1,224.2L323.1,221.4L324.4,223.2L325.4,224.9L327.2,229.5L328.9,213.4L330.5,211.1L332.3,216.9L334.1,211.1L335.7,210.0L336.7,214.0L338.0,219.1L339.0,218.9L340.3,221.4L341.5,221.3L342.6,222.6L344.0,215.4L344.9,211.1L346.4,212.3L347.2,212.3L348.7,214.7L349.5,214.6L350.9,214.2L351.8,213.4L352.6,214.2L354.1,213.4L355.0,212.2L356.4,212.3L357.7,213.5L358.7,214.6L360.6,220.3L362.2,212.3L363.8,206.5L365.6,219.1L366.7,217.1L367.9,212.3L369.1,212.3L370.2,213.4L371.3,210.0L372.3,215.1L373.6,218.0L374.8,215.5L375.9,211.1L377.0,211.3L378.2,213.4L379.4,213.8L380.5,212.3L381.5,212.6L382.8,211.1L384.3,212.7L385.1,212.3L386.5,211.3L387.4,213.4L389.3,219.1L390.9,211.1L392.1,215.7L393.2,218.0L394.0,218.4L395.5,220.3L397.1,215.7L398.9,222.6L399.9,220.4L401.2,218.0L402.3,215.6L403.5,213.4L404.9,211.8L405.8,213.4L406.7,211.1L408.1,211.1L409.9,222.6L411.6,213.4L412.4,212.6L413.8,214.6L415.3,215.1L416.1,213.4L417.0,212.8L418.4,212.3L419.5,211.1L420.7,211.1L421.8,216.2L423.0,220.3L424.9,224.9L426.5,218.0L427.7,225.6L428.8,234.1L430.6,212.3L431.6,211.1L432.9,211.1L433.7,211.9L435.0,212.3L435.3,212.3L436.6,215.9L437.6,220.3L438.5,215.8L439.9,213.4L441.0,213.2L442.2,212.3L443.6,213.6L444.5,215.7L445.9,219.5L446.8,222.6L447.9,227.4L449.1,232.9L450.3,223.2L451.4,212.3L452.5,212.3L453.7,211.1L454.8,209.1L456.0,208.8L457.2,216.3L458.3,222.6L460.1,236.4L461.8,220.3L462.6,215.5L464.1,211.1L465.2,215.8L466.4,218.0L467.8,219.9L468.6,222.6L470.1,221.8L470.9,219.1L471.9,219.6L473.2,220.3L475.1,227.2L476.7,218.0L477.6,216.1L479.0,212.3L480.2,212.9L481.3,211.1L482.6,213.9L483.6,215.7L484.9,217.1L485.9,218.0L486.8,215.4L488.2,212.3L489.0,210.0L490.5,210.0L491.8,209.1L492.8,211.1L493.6,213.8L495.1,219.1L496.5,215.2L497.4,213.4L498.2,215.6L499.7,215.7L500.5,215.1L502.0,212.3L503.2,212.8L504.3,211.1L505.7,217.7L506.6,223.7L507.9,216.5L508.9,212.3L510.2,211.7L511.1,211.1L512.4,213.3L513.4,218.0L514.8,216.5L515.7,212.3L516.6,212.3L518.0,213.4L519.2,215.0L520.3,214.6L521.3,213.0L522.6,213.4L523.6,213.2L524.9,212.3L526.3,211.3L527.2,211.1L528.3,215.9L529.5,221.4L530.6,220.6L531.8,220.3L533.7,228.3L535.3,215.7L536.1,212.8L537.6,210.0L539.0,210.3L539.9,211.1L541.2,210.6L542.2,212.3L543.4,211.9L544.5,210.0L545.7,211.7L546.8,213.4L547.9,217.9L549.1,221.4L550.5,216.3L551.3,213.4L552.2,213.6L553.6,212.3L555.1,212.9L555.9,213.4L557.1,218.7L558.2,222.6L559.2,216.7L560.5,212.3L561.6,213.1" fill="none" stroke="#a9a9a9" stroke-width=".6" stroke-linejoin="round"/>
<path d="M249.9,239.1L251.4,231.8L252.9,239.1Z" fill="#7fe9d3"/>
<path d="M270.6,231.8L272.1,220.3L273.6,231.8Z" fill="#7fe9d3"/>
<path d="M291.7,239.1L293.2,231.8L294.7,239.1Z" fill="#7fe9d3"/>
<path d="M334.2,217.5L335.7,210.0L337.2,217.5Z" fill="#7fe9d3"/>
<path d="M362.3,213.9L363.8,205.4L365.3,213.9Z" fill="#7fe9d3"/>
<path d="M389.4,216.2L390.9,208.8L392.4,216.2Z" fill="#7fe9d3"/>
<path d="M422.7,224.4L424.2,216.9L425.7,224.4Z" fill="#7fe9d3"/>
<path d="M446.5,210.0L448.0,190.4L449.5,210.0Z" fill="#7fe9d3"/>
<path d="M453.4,213.9L454.9,206.5L456.4,213.9Z" fill="#7fe9d3"/>
<path d="M458.6,236.8L460.1,224.9L461.6,236.8Z" fill="#7fe9d3"/>
<path d="M500.5,220.8L502.0,211.1L503.5,220.8Z" fill="#7fe9d3"/>
<path d="M547.6,222.1L549.1,213.4L550.6,222.1Z" fill="#7fe9d3"/>
<path d="M220.1,229.9L221.6,223.7L223.1,229.9Z" fill="#7fe9d3"/>
<path d="M48,247.5H561.5M48,224.5H561.5M48,202.5H561.5M48,179.5H561.5M48,157.5H561.5M48,134.5H561.5M48,112.5H561.5M48,89.5H561.5M48,67.5H561.5M48,44.5H561.5M48,22.5H561.5M105.5,22V247.5M156.5,22V247.5M206.5,22V247.5M257.5,22V247.5M308.5,22V247.5M358.5,22V247.5M409.5,22V247.5M459.5,22V247.5M510.5,22V247.5M561.5,22V247.5" stroke="#70706c" stroke-opacity=".3" fill="none" clip-path="url(#cpA)"/>
<rect x="51" y="22" width="4" height="230" fill="#1a1a1a"/><rect x="51" y="248" width="511" height="4" fill="#1a1a1a"/>
<path d="M54.5,252V255M105.5,252V255M156.5,252V255M206.5,252V255M257.5,252V255M308.5,252V255M358.5,252V255M409.5,252V255M459.5,252V255M510.5,252V255M561.5,252V255" stroke="#8a8a8a"/>
<defs><linearGradient id="gG" x1="0" y1="0" x2="0" y2="1"><stop offset="0" stop-color="#8cbd24"/><stop offset="1" stop-color="#6b9a2c"/></linearGradient><linearGradient id="gO" x1="0" y1="0" x2="0" y2="1"><stop offset="0" stop-color="#ffc400"/><stop offset=".45" stop-color="#c07800"/><stop offset="1" stop-color="#5a1c00"/></linearGradient><linearGradient id="gR" x1="0" y1="0" x2="0" y2="1"><stop offset="0" stop-color="#d02828"/><stop offset="1" stop-color="#8a1414"/></linearGradient><linearGradient id="gB" x1="0" y1="0" x2="0" y2="1"><stop offset="0" stop-color="#4468f0"/><stop offset="1" stop-color="#2a40c8"/></linearGradient></defs>
<path d="M49,462.5H344.5M49,429.5H344.5M49,397.5H344.5M49,364.5H344.5M49,332.5H344.5M96.5,326V462M137.5,326V462M178.5,326V462M220.5,326V462M261.5,326V462M302.5,326V462M344.5,326V462" stroke="#9b9b9b" fill="none"/>
<rect x="81.50" y="460.88" width="9.20" height="1.62" fill="#5e2200" stroke="#141414"/>
<rect x="91.70" y="460.88" width="9.20" height="1.62" fill="#a01c1c" stroke="#141414"/>
<rect x="101.90" y="460.88" width="9.20" height="1.62" fill="#2c44cc" stroke="#141414"/>
<rect x="117.70" y="343.98" width="9.20" height="118.52" fill="url(#gG)" stroke="#141414"/>
<rect x="127.90" y="326.13" width="9.20" height="136.37" fill="url(#gO)" stroke="#141414"/>
<rect x="138.10" y="460.23" width="9.20" height="2.27" fill="#a01c1c" stroke="#141414"/>
<rect x="148.30" y="423.86" width="9.20" height="38.64" fill="url(#gB)" stroke="#141414"/>
<rect x="164.10" y="387.82" width="9.20" height="74.68" fill="url(#gG)" stroke="#141414"/>
<rect x="174.30" y="450.81" width="9.20" height="11.69" fill="url(#gO)" stroke="#141414"/>
<rect x="184.50" y="460.55" width="9.20" height="1.95" fill="#2c44cc" stroke="#141414"/>
<rect x="210.50" y="424.83" width="9.20" height="37.67" fill="url(#gG)" stroke="#141414"/>
<rect x="220.70" y="460.88" width="9.20" height="1.62" fill="#5e2200" stroke="#141414"/>
<rect x="246.70" y="455.68" width="9.20" height="6.82" fill="url(#gG)" stroke="#141414"/>
<rect x="256.90" y="460.88" width="9.20" height="1.62" fill="#5e2200" stroke="#141414"/>
<rect x="267.10" y="459.90" width="9.20" height="2.60" fill="#a01c1c" stroke="#141414"/>
<rect x="288.00" y="359.25" width="9.20" height="103.25" fill="url(#gG)" stroke="#141414"/>
<rect x="298.20" y="416.72" width="9.20" height="45.78" fill="url(#gO)" stroke="#141414"/>
<rect x="308.40" y="459.90" width="9.20" height="2.60" fill="#a01c1c" stroke="#141414"/>
<rect x="51.5" y="326" width="3.7" height="140.5" fill="#1a1a1a"/><rect x="51.5" y="462.6" width="293" height="4" fill="#1a1a1a"/>
<path d="M96.5,467V470M137.5,467V470M178.5,467V470M220.5,467V470M261.5,467V470M302.5,467V470M344.5,467V470" stroke="#8a8a8a"/>
<defs><radialGradient id="rY" gradientUnits="userSpaceOnUse" cx="438.8" cy="416.7" r="83"><stop offset="0" stop-color="#ffffd2"/><stop offset="1" stop-color="#fdfd9c"/></radialGradient><radialGradient id="rY2" gradientUnits="userSpaceOnUse" cx="673.5" cy="416.6" r="81"><stop offset="0" stop-color="#fff6a0"/><stop offset="1" stop-color="#fdee74"/></radialGradient><radialGradient id="rG2" gradientUnits="userSpaceOnUse" cx="673.5" cy="416.6" r="81"><stop offset="0" stop-color="#c4f59c"/><stop offset="1" stop-color="#aeee7c"/></radialGradient><radialGradient id="rB2" gradientUnits="userSpaceOnUse" cx="673.5" cy="416.6" r="81"><stop offset="0" stop-color="#93a8fb"/><stop offset="1" stop-color="#7e96f4"/></radialGradient><radialGradient id="rGr2" gradientUnits="userSpaceOnUse" cx="673.5" cy="416.6" r="81"><stop offset="0" stop-color="#cccccc"/><stop offset="1" stop-color="#bdbdbd"/></radialGradient></defs>
<path d="M438.4,415.5L438.4,333.90A82.8,82.8 0 0 1 520.64,404.16Z" fill="url(#rY)" stroke="#111"/>
<circle cx="438.8" cy="416.7" r="82.8" fill="none" stroke="#0c0c0c" stroke-width="2"/>
<path d="M673.4,416.6L673.40,336.30A80.3,80.3 0 0 1 750.66,438.49Z" fill="url(#rY2)" stroke="#111" stroke-width=".9" stroke-linejoin="round"/>
<path d="M673.4,416.6L750.66,438.49A80.3,80.3 0 0 1 702.87,491.30Z" fill="url(#rG2)" stroke="#111" stroke-width=".9" stroke-linejoin="round"/>
<path d="M673.4,416.6L702.87,491.30A80.3,80.3 0 0 1 640.60,489.90Z" fill="url(#rB2)" stroke="#111" stroke-width=".9" stroke-linejoin="round"/>
<path d="M673.4,416.6L640.60,489.90A80.3,80.3 0 0 1 603.03,455.28Z" fill="url(#rGr2)" stroke="#111" stroke-width=".9" stroke-linejoin="round"/>
<path d="M673.4,416.6L603.03,455.28A80.3,80.3 0 0 1 602.23,453.80Z" fill="#7de8d2" stroke="#111" stroke-width=".9" stroke-linejoin="round"/>
<path d="M673.4,416.6L602.23,453.80A80.3,80.3 0 0 1 601.84,453.03Z" fill="#cc6600" stroke="#111" stroke-width=".9" stroke-linejoin="round"/>
<path d="M673.4,416.6L601.84,453.03M673.4,416.6V336.3" stroke="#111" stroke-width="1.3"/>
<circle cx="673.4" cy="416.6" r="80.3" fill="none" stroke="#0c0c0c" stroke-width="2"/>
<path d="M532.6,4.9V2.9H537.5V7.9H535.7" fill="none" stroke="#222" stroke-width="1.3"/><rect x="530.7" y="5.6" width="4.9" height="4.7" fill="none" stroke="#222" stroke-width="1.3"/><path d="M532.1,3.3H537.7" stroke="#222" stroke-width="1.6"/>
<path d="M551.4,3.6L558.4,10.6M558.4,3.6L551.4,10.6" stroke="#222" stroke-width="1.7"/>
<path d="M793.6,4.9V2.9H798.5V7.9H796.7" fill="none" stroke="#222" stroke-width="1.3"/><rect x="791.7" y="5.6" width="4.9" height="4.7" fill="none" stroke="#222" stroke-width="1.3"/><path d="M793.1,3.3H798.7" stroke="#222" stroke-width="1.6"/>
<path d="M812.4,3.6L819.4,10.6M819.4,3.6L812.4,10.6" stroke="#222" stroke-width="1.7"/>
<path d="M316.1,308.8V306.8H321.0V311.8H319.2" fill="none" stroke="#222" stroke-width="1.3"/><rect x="314.2" y="309.5" width="4.9" height="4.7" fill="none" stroke="#222" stroke-width="1.3"/><path d="M315.6,307.2H321.2" stroke="#222" stroke-width="1.6"/>
<path d="M334.9,307.5L341.9,314.5M341.9,307.5L334.9,314.5" stroke="#222" stroke-width="1.7"/>
<path d="M554.1,308.8V306.8H559.0V311.8H557.2" fill="none" stroke="#222" stroke-width="1.3"/><rect x="552.2" y="309.5" width="4.9" height="4.7" fill="none" stroke="#222" stroke-width="1.3"/><path d="M553.6,307.2H559.2" stroke="#222" stroke-width="1.6"/>
<path d="M572.9,307.5L579.9,314.5M579.9,307.5L572.9,314.5" stroke="#222" stroke-width="1.7"/>
<path d="M793.6,308.8V306.8H798.5V311.8H796.7" fill="none" stroke="#222" stroke-width="1.3"/><rect x="791.7" y="309.5" width="4.9" height="4.7" fill="none" stroke="#222" stroke-width="1.3"/><path d="M793.1,307.2H798.7" stroke="#222" stroke-width="1.6"/>
<path d="M812.4,307.5L819.4,314.5M819.4,307.5L812.4,314.5" stroke="#222" stroke-width="1.7"/>
</svg>
<div class="t" style="left:40.76px;top:243px;font-size:10.5px;-webkit-text-stroke-width:.33px;">0</div>
<div class="t" style="left:35.15px;top:220px;font-size:10.5px;-webkit-text-stroke-width:.33px;letter-spacing:-0.117px;">10</div>
<div class="t" style="left:35.15px;top:198px;font-size:10.5px;-webkit-text-stroke-width:.33px;letter-spacing:-0.117px;">20</div>
<div class="t" style="left:35.15px;top:175px;font-size:10.5px;-webkit-text-stroke-width:.33px;letter-spacing:-0.117px;">30</div>
<div class="t" style="left:35.15px;top:153px;font-size:10.5px;-webkit-text-stroke-width:.33px;letter-spacing:-0.117px;">40</div>
<div class="t" style="left:35.15px;top:130px;font-size:10.5px;-webkit-text-stroke-width:.33px;letter-spacing:-0.117px;">50</div>
<div class="t" style="left:35.15px;top:108px;font-size:10.5px;-webkit-text-stroke-width:.33px;letter-spacing:-0.117px;">60</div>
<div class="t" style="left:35.15px;top:85px;font-size:10.5px;-webkit-text-stroke-width:.33px;letter-spacing:-0.117px;">70</div>
<div class="t" style="left:35.15px;top:63px;font-size:10.5px;-webkit-text-stroke-width:.33px;letter-spacing:-0.117px;">80</div>
<div class="t" style="left:29.61px;top:25px;font-size:10.5px;font-weight:bold;letter-spacing:-0.175px;">100</div>
<div class="t" style="left:19.90px;top:48px;font-size:10.5px;-webkit-text-stroke-width:.33px;letter-spacing:-0.590px;">[%]</div>
<div class="t" style="left:42.70px;top:258px;font-size:10.5px;font-weight:bold;letter-spacing:-0.131px;">16:00</div>
<div class="t" style="left:92.75px;top:258px;font-size:10.5px;-webkit-text-stroke-width:.33px;letter-spacing:-0.275px;">16:01</div>
<div class="t" style="left:143.75px;top:258px;font-size:10.5px;-webkit-text-stroke-width:.33px;letter-spacing:-0.275px;">16:02</div>
<div class="t" style="left:193.75px;top:258px;font-size:10.5px;-webkit-text-stroke-width:.33px;letter-spacing:-0.275px;">16:03</div>
<div class="t" style="left:244.75px;top:258px;font-size:10.5px;-webkit-text-stroke-width:.33px;letter-spacing:-0.275px;">16:04</div>
<div class="t" style="left:295.10px;top:258px;font-size:10.5px;font-weight:bold;letter-spacing:-0.131px;">16:05</div>
<div class="t" style="left:345.75px;top:258px;font-size:10.5px;-webkit-text-stroke-width:.33px;letter-spacing:-0.275px;">16:06</div>
<div class="t" style="left:396.75px;top:258px;font-size:10.5px;-webkit-text-stroke-width:.33px;letter-spacing:-0.275px;">16:07</div>
<div class="t" style="left:446.75px;top:258px;font-size:10.5px;-webkit-text-stroke-width:.33px;letter-spacing:-0.275px;">16:08</div>
<div class="t" style="left:500.00px;top:256px;font-size:10.5px;-webkit-text-stroke-width:.33px;letter-spacing:0.088px;">[time]</div>
<div class="ab" style="left:520px;top:254px;width:42px;height:16px;overflow:hidden">
<div class="t" style="left:16.00px;top:2px;font-size:10.5px;font-weight:bold;letter-spacing:0.029px;">16:10</div>
</div>
<div class="ab" style="left:0;top:272px;width:562px;height:17px;overflow:hidden;transform:translate(.5px,.5px)">
<div class="lg" style="left:-62px;width:66px;background:#d6f5b2;border-color:#9ccf6a"></div>
<div class="lg" style="left:8px;width:66px;background:#cc6600;border-color:#b05a06"></div>
<div class="t" style="left:14.40px;top:3px;font-size:11px;-webkit-text-stroke-width:.55px;letter-spacing:0.043px;">Gr-Change</div>
<div class="lg" style="left:78px;width:66px;background:#f7a934;border-color:#e39a2c"></div>
<div class="t" style="left:104.25px;top:3px;font-size:11px;-webkit-text-stroke-width:.55px;letter-spacing:-0.877px;">AIE</div>
<div class="lg" style="left:148px;width:66px;background:#fff27a;border-color:#ead84a"></div>
<div class="t" style="left:152.90px;top:3px;font-size:11px;-webkit-text-stroke-width:.55px;letter-spacing:-0.027px;">Cell change</div>
<div class="lg" style="left:218px;width:66px;background:#f46e74;border-color:#dd5d63"></div>
<div class="t" style="left:242.50px;top:3px;font-size:11px;-webkit-text-stroke-width:.55px;letter-spacing:-1.544px;">GPS</div>
<div class="lg" style="left:288px;width:66px;background:#d28af2;border-color:#bd74de"></div>
<div class="t" style="left:311.95px;top:3px;font-size:11px;-webkit-text-stroke-width:.55px;letter-spacing:-0.973px;">SDS</div>
<div class="lg" style="left:358px;width:66px;background:#7f96f0;border-color:#6c83dc"></div>
<div class="t" style="left:374.40px;top:3px;font-size:11px;-webkit-text-stroke-width:.55px;letter-spacing:-0.272px;">L2 data</div>
<div class="lg" style="left:428px;width:66px;background:#a9e97c;border-color:#93d066"></div>
<div class="t" style="left:453.15px;top:3px;font-size:11px;-webkit-text-stroke-width:.55px;letter-spacing:-0.413px;">Call</div>
<div class="lg" style="left:498px;width:66px;background:#7ce8d2;border-color:#6ad2bd"></div>
<div class="t" style="left:517.20px;top:3px;font-size:11px;-webkit-text-stroke-width:.55px;letter-spacing:0.338px;">Other</div>
</div>
<div class="t" style="left:41.56px;top:458px;font-size:10.5px;-webkit-text-stroke-width:.33px;">0</div>
<div class="t" style="left:30.23px;top:425px;font-size:10.5px;-webkit-text-stroke-width:.33px;letter-spacing:-0.117px;">100</div>
<div class="t" style="left:30.23px;top:393px;font-size:10.5px;-webkit-text-stroke-width:.33px;letter-spacing:-0.117px;">200</div>
<div class="t" style="left:30.23px;top:360px;font-size:10.5px;-webkit-text-stroke-width:.33px;letter-spacing:-0.117px;">300</div>
<div class="t" style="left:29.10px;top:329px;font-size:10.5px;font-weight:bold;letter-spacing:0.260px;">420</div>
<div class="t" style="left:7.60px;top:345px;font-size:10.5px;-webkit-text-stroke-width:.33px;letter-spacing:0.421px;">[Count]</div>
<div class="t" style="left:71.70px;top:472px;letter-spacing:0.080px;">unknown</div>
<div class="t" style="left:123.80px;top:472px;letter-spacing:-0.353px;">&lt; 500</div>
<div class="t" style="left:161.55px;top:472px;letter-spacing:-0.590px;">&lt; 1000</div>
<div class="t" style="left:204.40px;top:472px;letter-spacing:-0.573px;">&lt; 1500</div>
<div class="t" style="left:245.60px;top:472px;letter-spacing:-0.706px;">&lt; 2000</div>
<div class="t" style="left:287.50px;top:472px;letter-spacing:-0.080px;">larger</div>
<div class="t" style="left:317.60px;top:471px;font-size:10.5px;-webkit-text-stroke-width:.33px;letter-spacing:-0.308px;">[ms]</div>
<div class="ab" style="left:0;top:488px;width:344.5px;height:17px;overflow:hidden">
<div class="lg" style="left:1px;width:64px;height:20px;background:#7ab11e;border-color:#5e8d12"></div>
<div class="t" style="left:14.90px;top:3px;font-size:11px;-webkit-text-stroke-width:.55px;letter-spacing:0.062px;">Accept</div>
<div class="lg" style="left:69.5px;width:67.5px;height:20px;background:#fbbd00;border-color:#7a2a00"></div>
<div class="t" style="left:86.40px;top:3px;font-size:11px;-webkit-text-stroke-width:.55px;letter-spacing:0.024px;">Broken</div>
<div class="lg" style="left:141.5px;width:67.5px;height:20px;background:#cf2a2a;border-color:#a81c1c"></div>
<div class="t" style="left:159.90px;top:3px;font-size:11px;-webkit-text-stroke-width:.55px;letter-spacing:0.137px;color:#fff;">Reject</div>
<div class="lg" style="left:213.5px;width:67.5px;height:20px;background:#4263ee;border-color:#2f4bd0"></div>
<div class="t" style="left:228.40px;top:3px;font-size:11px;-webkit-text-stroke-width:.55px;letter-spacing:0.067px;color:#fff;">Leaving</div>
<div class="lg" style="left:285.5px;width:67.5px;height:20px;background:#e310e3;border-color:#c400c4"></div>
<div class="t" style="left:289.50px;top:3px;font-size:11px;-webkit-text-stroke-width:.55px;letter-spacing:0.090px;color:#fff;">Update cm</div>
</div>
<div class="t" style="left:409.45px;top:425px;letter-spacing:-0.629px;">Free: 77.42%</div>
<div class="bx" style="left:525px;top:326px;width:57px;height:30px"></div>
<div class="t" style="left:533.75px;top:334px;letter-spacing:-0.676px;">16:09:54</div>
<div class="bx" style="left:525px;top:359px;width:57px;height:30px"></div>
<div class="t" style="left:530.50px;top:359px;letter-spacing:-0.707px;">Free TCH</div>
<div class="t" style="left:547.69px;top:375px;letter-spacing:-0.467px;">24</div>
<div class="bx" style="left:525px;top:392px;width:57px;height:30px;background:#ffffa3"></div>
<div class="t" style="left:527.90px;top:392px;-webkit-text-stroke-width:.55px;letter-spacing:-0.200px;">P2MP call</div>
<div class="t" style="left:550.56px;top:408px;-webkit-text-stroke-width:.55px;">7</div>
<div class="t" style="left:624.60px;top:386px;letter-spacing:-0.842px;">Free:</div>
<div class="t" style="left:617.90px;top:402px;letter-spacing:-0.583px;">32.49%</div>
<div class="bx" style="left:757px;top:326px;width:65px;height:31px;background:#fff27a;border-color:#2a2a2a"></div>
<div class="t" style="left:758.82px;top:327px;font-size:11px;-webkit-text-stroke-width:.55px;letter-spacing:0.370px;">Cell change</div>
<div class="t" style="left:767.99px;top:343px;font-size:11px;-webkit-text-stroke-width:.55px;">29.395%</div>
<div class="bx" style="left:757px;top:356px;width:65px;height:31px;background:#a9e97c;border-color:#2a2a2a"></div>
<div class="t" style="left:779.76px;top:357px;font-size:11px;-webkit-text-stroke-width:.55px;letter-spacing:0.332px;">Call</div>
<div class="t" style="left:767.99px;top:373px;font-size:11px;-webkit-text-stroke-width:.55px;">14.624%</div>
<div class="bx" style="left:757px;top:386px;width:65px;height:31px;background:#7f96f0;border-color:#2a2a2a"></div>
<div class="t" style="left:770.26px;top:387px;font-size:11px;-webkit-text-stroke-width:.55px;letter-spacing:0.367px;">L2 data</div>
<div class="t" style="left:767.99px;top:403px;font-size:11px;-webkit-text-stroke-width:.55px;">12.677%</div>
<div class="bx" style="left:757px;top:416px;width:65px;height:31px;background:#c0c0c0;border-color:#2a2a2a"></div>
<div class="t" style="left:765.71px;top:417px;font-size:11px;-webkit-text-stroke-width:.55px;letter-spacing:0.528px;">D-NWRK</div>
<div class="t" style="left:767.99px;top:433px;font-size:11px;-webkit-text-stroke-width:.55px;">10.305%</div>
<div class="bx" style="left:757px;top:446px;width:65px;height:31px;background:#7ce8d2;border-color:#2a2a2a"></div>
<div class="t" style="left:775.18px;top:447px;font-size:11px;-webkit-text-stroke-width:.55px;letter-spacing:0.385px;">Other</div>
<div class="t" style="left:771.05px;top:463px;font-size:11px;-webkit-text-stroke-width:.55px;">0.334%</div>
<div class="bx" style="left:757px;top:476px;width:65px;height:31px;background:#cc6600;border-color:#2a2a2a"></div>
<div class="t" style="left:760.79px;top:477px;font-size:11px;-webkit-text-stroke-width:.55px;letter-spacing:0.423px;">Gr-Change</div>
<div class="t" style="left:771.05px;top:493px;font-size:11px;-webkit-text-stroke-width:.55px;">0.171%</div>
</body></html>
